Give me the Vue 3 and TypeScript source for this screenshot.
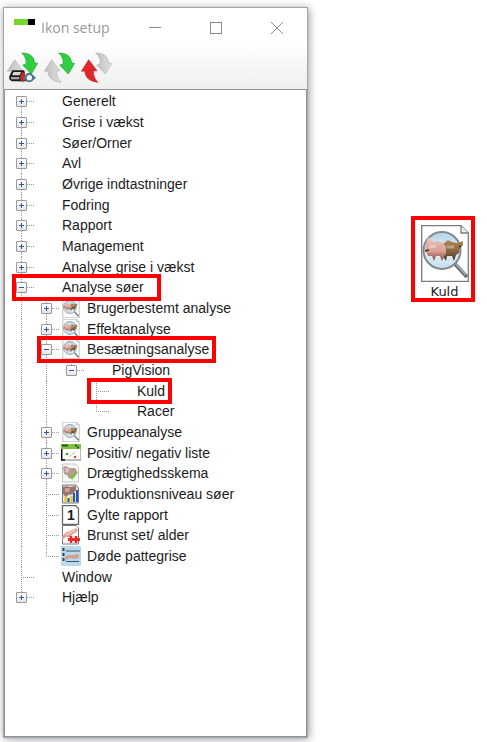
<script setup lang="ts">
import { computed, ref } from 'vue'

interface TreeNode {
  label: string
  icon?: string
  expandable?: boolean
  mark?: 'near' | 'wide'
  children?: TreeNode[]
}

interface Row {
  node: TreeNode
  level: number
  guides: boolean[]
  first: boolean
  last: boolean
  open: boolean
}

const nodes: TreeNode[] = [
  { label: 'Generelt', expandable: true },
  { label: 'Grise i vækst', expandable: true },
  { label: 'Søer/Orner', expandable: true },
  { label: 'Avl', expandable: true },
  { label: 'Øvrige indtastninger', expandable: true },
  { label: 'Fodring', expandable: true },
  { label: 'Rapport', expandable: true },
  { label: 'Management', expandable: true },
  { label: 'Analyse grise i vækst', expandable: true },
  {
    label: 'Analyse søer',
    expandable: true,
    mark: 'wide',
    children: [
      { label: 'Brugerbestemt analyse', icon: 'lens', expandable: true },
      { label: 'Effektanalyse', icon: 'lens', expandable: true },
      {
        label: 'Besætningsanalyse',
        icon: 'lens',
        expandable: true,
        mark: 'near',
        children: [
          {
            label: 'PigVision',
            expandable: true,
            children: [{ label: 'Kuld', mark: 'near' }, { label: 'Racer' }],
          },
        ],
      },
      { label: 'Gruppeanalyse', icon: 'lens', expandable: true },
      { label: 'Positiv/ negativ liste', icon: 'list', expandable: true },
      { label: 'Drægtighedsskema', icon: 'check', expandable: true },
      { label: 'Produktionsniveau søer', icon: 'chart' },
      { label: 'Gylte rapport', icon: 'one' },
      { label: 'Brunst set/ alder', icon: 'heat' },
      { label: 'Døde pattegrise', icon: 'dead' },
    ],
  },
  { label: 'Window' },
  { label: 'Hjælp', expandable: true },
]

const openLabels = ref<Set<string>>(new Set(['Analyse søer', 'Besætningsanalyse', 'PigVision']))

function flatten(list: TreeNode[], level: number, guides: boolean[]): Row[] {
  return list.flatMap((node, i) => {
    const last = i === list.length - 1
    const open = openLabels.value.has(node.label)
    const row: Row = { node, level, guides, first: level === 0 && i === 0, last, open }
    const below = open && node.children ? flatten(node.children, level + 1, [...guides, !last]) : []
    return [row, ...below]
  })
}

const rows = computed(() => flatten(nodes, 0, []))

function toggle(label: string) {
  const next = new Set(openLabels.value)
  if (!next.delete(label)) next.add(label)
  openLabels.value = next
}
</script>

<template>
  <svg class="defs" aria-hidden="true">
    <defs>
      <linearGradient id="glass" x1="0" y1="0" x2="0" y2="1">
        <stop offset="0" stop-color="#b4d2e6" />
        <stop offset="0.5" stop-color="#e2eff6" />
        <stop offset="1" stop-color="#c9dfec" />
      </linearGradient>
      <linearGradient id="rose" x1="0" y1="0" x2="0" y2="1">
        <stop offset="0" stop-color="#ecc4ba" />
        <stop offset="0.6" stop-color="#d79f94" />
        <stop offset="1" stop-color="#7c483f" />
      </linearGradient>
      <linearGradient id="brown" x1="0" y1="0" x2="0" y2="1">
        <stop offset="0" stop-color="#b08a5c" />
        <stop offset="0.6" stop-color="#80603a" />
        <stop offset="1" stop-color="#3c2919" />
      </linearGradient>
      <linearGradient id="silver" x1="0" y1="0" x2="1" y2="0">
        <stop offset="0" stop-color="#bdbdbd" />
        <stop offset="1" stop-color="#e2e2e2" />
      </linearGradient>
      <symbol id="arrow-up" viewBox="0 0 93 93">
        <path d="M23 23 L1 58 L11 57 Q14 88 51 91 Q38 80 37 57 L48 56 Z" stroke-width="2" stroke-linejoin="round" />
      </symbol>
      <symbol id="arrow-down" viewBox="0 0 93 93">
        <path d="M44 3 Q80 2 83 33 L92 34 L73 66 L47 39 L57 37 Q60 16 44 3 Z" stroke-width="2" stroke-linejoin="round" />
      </symbol>
      <symbol id="icon-lens" viewBox="0 0 48 57">
        <path d="M0.7 0.7 H40 L47.3 8 V56.3 H0.7 Z" fill="#fff" stroke="#7c7c7c" stroke-width="1.3" />
        <path d="M40 0.7 V8 H47.3" fill="#eee" stroke="#7c7c7c" stroke-width="1.3" />
        <path d="M34 39 L46 52" stroke="#6c7174" stroke-width="4" />
        <path d="M34 38 L45 50" stroke="#a9adb0" stroke-width="1.500" />
        <circle cx="21" cy="25.500" r="18.500" fill="url(#glass)" stroke="#7f8b93" stroke-width="2" />
        <path d="M22 19 L27 15 L31 17 L36 18 L42 16 L42 20 L39 23 L38 28 L35 30 L33 36 L31 31 L26 31 L25 36 L22 31 Z" fill="url(#brown)" />
        <path d="M5 19 L7 12 L12 17 L17 16 L21 18 L25 21 L25 29 L23 32 L21 36 L19 31 L15 31 L13 36 L11 31 L7 31 L4 25 Z" fill="url(#rose)" />
        <path d="M26 22 H33 M8 22 L15 21" stroke="#fff" stroke-opacity="0.35" stroke-width="3" />
        <path d="M4 26 L8 25 M38 21 L40 22" stroke="#4a3028" stroke-width="1.500" />
      </symbol>
      <symbol id="icon-list" viewBox="0 0 20 20">
        <rect x="1" y="2" width="19" height="15" fill="#fff" stroke="#777" />
        <rect x="0" y="1" width="20" height="5" fill="#7fc241" />
        <path d="M1 2.500 H7 M14 2.500 H16 M16 4.500 H18" stroke="#2c5a19" stroke-width="2" />
        <path d="M0.500 6 V17 H4" fill="none" stroke="#111" stroke-width="1.500" />
        <path d="M8 14 L14 9" stroke="#bbb" />
        <circle cx="6" cy="11" r="1.300" fill="#45a33a" />
        <circle cx="14" cy="14" r="1.300" fill="#e04a3d" />
      </symbol>
      <symbol id="icon-check" viewBox="0 0 20 20">
        <path d="M1.500 1 H14 L17.500 4 V19 H1.500 Z" fill="#f7f7f7" stroke="#c5c5c5" />
        <path d="M2 4 L5 3 L8 5 L14 5 L16 8 L14 13 L10 14 L8 16 L6 12 L3 11 Z" fill="#b99991" />
        <path d="M4 5 L9 6 L7 10 L4 9 Z" fill="#d9c0b8" />
        <path d="M9 13 L11 15 L16 9" fill="none" stroke="#7bbf4d" stroke-width="2.500" />
      </symbol>
      <symbol id="icon-chart" viewBox="0 0 20 20">
        <path d="M1.500 1 H15 L17.500 4 V19 H1.500 Z" fill="#e9e9e9" stroke="#777" />
        <path d="M2 3 L6 2 L9 3 L15 2 L15 6 L12 10 L7 11 L5 13 L2 10 Z" fill="#9c7468" />
        <path d="M4 4 L9 4 L8 8 L4 8 Z" fill="#cda394" />
        <path d="M4.500 18 V13 M10.500 18 V12" stroke="#f0c61f" stroke-width="2.500" />
        <path d="M7.500 18 V14 M13 18 V9 M16 18 V6" stroke="#1c55c4" stroke-width="2" />
      </symbol>
      <symbol id="icon-one" viewBox="0 0 20 20">
        <path d="M1.500 0.500 H14.500 L17.500 3.500 V19.500 H1.500 Z" fill="#fff" stroke="#666" stroke-width="1.300" />
      </symbol>
      <symbol id="icon-heat" viewBox="0 0 20 20">
        <path d="M1.500 0.500 H15 L17.500 3 V19 H1.500 Z" fill="#fff" stroke="#777" />
        <path d="M1 12 Q5 6 9 6 L15 3 L17 6 L12 9 L9 12 L5 12 L1 15 Z" fill="#dea294" />
        <path d="M5 10 L14 5" stroke="#f3cdc3" stroke-width="1.500" />
        <path d="M7 14.500 H19" stroke="#ed2b26" stroke-width="3" />
        <path d="M10 11 V18 M15 11 V18" stroke="#ed2b26" stroke-width="2.500" />
      </symbol>
      <symbol id="icon-dead" viewBox="0 0 20 20">
        <rect width="20" height="20" fill="#b9d8ea" />
        <path d="M2.500 2 V16" stroke="#28455c" stroke-width="2" stroke-dasharray="3 2" />
        <path d="M5 5 H19 M5 15.500 H18" stroke="#38566c" stroke-width="1.200" />
        <path d="M3 12 Q7 8 11 9 L17 8 L19 11 L14 13 L9 12 L5 14 Z" fill="#cfa293" />
      </symbol>
    </defs>
  </svg>

  <main class="desktop">
    <section class="window" aria-label="Ikon setup">
      <header class="titlebar">
        <span class="app-mark" aria-hidden="true"></span>
        <h1 class="title">Ikon setup</h1>
        <div class="controls">
          <button type="button" aria-label="Minimer">
            <svg viewBox="0 0 14 14"><path d="M1 6.500 H13" /></svg>
          </button>
          <button type="button" aria-label="Maksimer">
            <svg viewBox="0 0 14 14"><rect x="1.500" y="1.500" width="11" height="11" /></svg>
          </button>
          <button type="button" aria-label="Luk">
            <svg viewBox="0 0 14 14"><path d="M1 1 L13 13 M13 1 L1 13" /></svg>
          </button>
        </div>
      </header>

      <div class="toolbar" role="toolbar" aria-label="Ikoner">
        <button type="button" aria-label="Gem og opdater">
          <svg viewBox="0 0 93 93">
            <use href="#arrow-up" class="silver" width="93" height="93" />
            <use href="#arrow-down" class="green" width="93" height="93" />
            <path d="M16 55 H52 L58 88 H14 L7 82 V72 Z" fill="#1c1c1c" />
            <path d="M20 60 H42 L38 70 H15 Z" fill="#d8d8d8" />
            <path d="M12 75 H37 V82 H12 Z" fill="#a6a6a6" />
            <path d="M44 60 L54 64 V86 H40 V72 Z" fill="#d81f24" />
            <path d="M47 77 L58 66 Q66 58 75 66 L87 77 L75 88 Q66 94 58 88 Z" fill="#4a7690" />
            <circle cx="67" cy="77" r="8" fill="#f4f8fa" />
          </svg>
        </button>
        <button type="button" aria-label="Hent">
          <svg viewBox="0 0 93 93">
            <use href="#arrow-up" class="silver" width="93" height="93" />
            <use href="#arrow-down" class="green" width="93" height="93" />
          </svg>
        </button>
        <button type="button" aria-label="Send">
          <svg viewBox="0 0 93 93">
            <use href="#arrow-up" class="red" width="93" height="93" />
            <use href="#arrow-down" class="silver" width="93" height="93" />
          </svg>
        </button>
      </div>

      <ul class="tree" role="tree">
        <li
          v-for="row in rows"
          :key="row.node.label"
          class="row"
          role="treeitem"
          :aria-level="row.level + 1"
          :aria-expanded="row.node.expandable ? row.open : undefined"
        >
          <span v-for="(on, g) in row.guides" :key="g" class="cell" :class="{ line: on }"></span>
          <span class="item" :class="row.node.mark && ['marked', row.node.mark]">
            <span class="cell branch line" :class="{ first: row.first, last: row.last }">
              <button
                v-if="row.node.expandable"
                type="button"
                class="expander"
                :aria-label="(row.open ? 'Luk ' : 'Åbn ') + row.node.label"
                @click="toggle(row.node.label)"
              >
                <svg viewBox="0 0 9 9">
                  <path d="M2 4.500 H7" />
                  <path v-if="!row.open" d="M4.500 2 V7" />
                </svg>
              </button>
            </span>
            <span class="slot">
              <svg v-if="row.node.icon" class="icon" aria-hidden="true">
                <use :href="'#icon-' + row.node.icon" width="20" height="20" />
              </svg>
              <b v-if="row.node.icon === 'one'" class="digit">1</b>
            </span>
            <span class="label">{{ row.node.label }}</span>
          </span>
        </li>
      </ul>
    </section>

    <button type="button" class="shortcut">
      <svg class="shortcut-icon" viewBox="0 0 48 57" aria-hidden="true">
        <use href="#icon-lens" width="48" height="57" />
      </svg>
      <span>Kuld</span>
    </button>
  </main>
</template>

<style>
body {
  background: #fff;
}
</style>

<style scoped>
.defs {
  position: absolute;
  width: 0;
  height: 0;
}

.desktop {
  box-sizing: border-box;
  display: flex;
  align-items: flex-start;
  justify-content: space-between;
  min-height: 100vh;
  padding: 7px 12px 4px 3px;
  font-family: "Liberation Sans", Arial, sans-serif;
}

button {
  margin: 0;
  padding: 0;
  border: 0;
  background: none;
  font: inherit;
  color: inherit;
}

.window {
  box-sizing: border-box;
  align-self: stretch;
  display: flex;
  flex-direction: column;
  flex: 0 1 305px;
  min-width: 0;
  border: 1px solid #a3a5a7;
  background: #fff;
  box-shadow: 1px 1px 8px rgba(0, 0, 0, 0.4);
}

.titlebar {
  display: flex;
  align-items: center;
  height: 39px;
  padding-left: 10px;
}

.app-mark {
  align-self: flex-start;
  width: 14px;
  height: 6px;
  margin-top: 11px;
  border-right: 7px solid #000;
  background: #76d62c;
}

.title {
  margin: 0 0 0 6px;
  font: 14px/20px "Open Sans", "Noto Sans", sans-serif;
  color: #999;
}

.controls {
  display: flex;
  margin-left: auto;
}

.controls button {
  display: grid;
  place-items: center;
  width: 61px;
  height: 39px;
}

.controls svg {
  width: 14px;
  height: 14px;
  fill: none;
  stroke: #8a8a8a;
}

.toolbar {
  display: flex;
  gap: 6px;
  padding: 5px 3px 6px;
  background: linear-gradient(#fdfdfd, #efefef);
}

.toolbar button,
.toolbar svg {
  display: block;
  width: 31px;
  height: 31px;
}

.silver {
  fill: url(#silver);
  stroke: #b3b3b3;
}

.green {
  fill: #2fd03f;
  stroke: #1f9c34;
}

.red {
  fill: #e0262a;
  stroke: #b8302f;
}

.tree {
  flex: 1;
  margin: 0;
  padding: 1px 0 8px 4px;
  border: 1px solid #8d949b;
  list-style: none;
  font-size: 14px;
  color: #1c1c1c;
}

.row {
  display: flex;
  height: 21px;
}

.row:nth-child(3n) {
  height: 20px;
}

.item {
  position: relative;
  display: flex;
  align-items: flex-start;
}

.cell {
  position: relative;
  flex: none;
  display: grid;
  place-items: start center;
  align-self: stretch;
  width: 25px;
}

.line {
  background: repeating-linear-gradient(#999 0 1px, transparent 1px 2px) 12px 0 / 1px 100% no-repeat;
}

.line.first {
  background-position: 12px 10px;
}

.line.last {
  background-size: 1px 50%;
}

.branch::after {
  content: "";
  position: absolute;
  top: 10px;
  left: 12px;
  right: 0;
  height: 1px;
  background: repeating-linear-gradient(90deg, #999 0 1px, transparent 1px 2px);
}

.expander {
  position: relative;
  z-index: 1;
  box-sizing: border-box;
  display: block;
  width: 11px;
  height: 11px;
  margin-top: 5px;
  border: 1px solid #999;
  border-radius: 1px;
  background: linear-gradient(#fff, #e6e6e6);
}

.expander svg {
  display: block;
  width: 9px;
  height: 9px;
  fill: none;
  stroke: #3053b0;
}

.slot {
  position: relative;
  flex: none;
  display: grid;
  place-items: center;
  width: 20px;
  height: 20px;
  margin: 0 6px 0 2px;
}

.icon {
  grid-area: 1 / 1;
  display: block;
  width: 20px;
  height: 20px;
}

.digit {
  position: relative;
  grid-area: 1 / 1;
  font-size: 14px;
  line-height: 20px;
}

.label {
  line-height: 20px;
  white-space: nowrap;
}

.marked.near {
  padding-right: 7px;
}

.marked.wide {
  padding-right: 17px;
}

.marked::after {
  content: "";
  position: absolute;
  z-index: 2;
  inset: -3px 0 -3px 3px;
  border: 4px solid #fe0000;
  pointer-events: none;
}

.shortcut {
  box-sizing: border-box;
  display: flex;
  flex-direction: column;
  align-items: center;
  width: 64px;
  height: 86px;
  margin-top: 209px;
  padding: 5px 0 0 3px;
  border: 4px solid #fe0000;
  font: 13px/20px "DejaVu Sans", sans-serif;
  color: #222;
}

.shortcut-icon {
  flex: none;
  display: block;
  width: 48px;
  height: 57px;
}
</style>
